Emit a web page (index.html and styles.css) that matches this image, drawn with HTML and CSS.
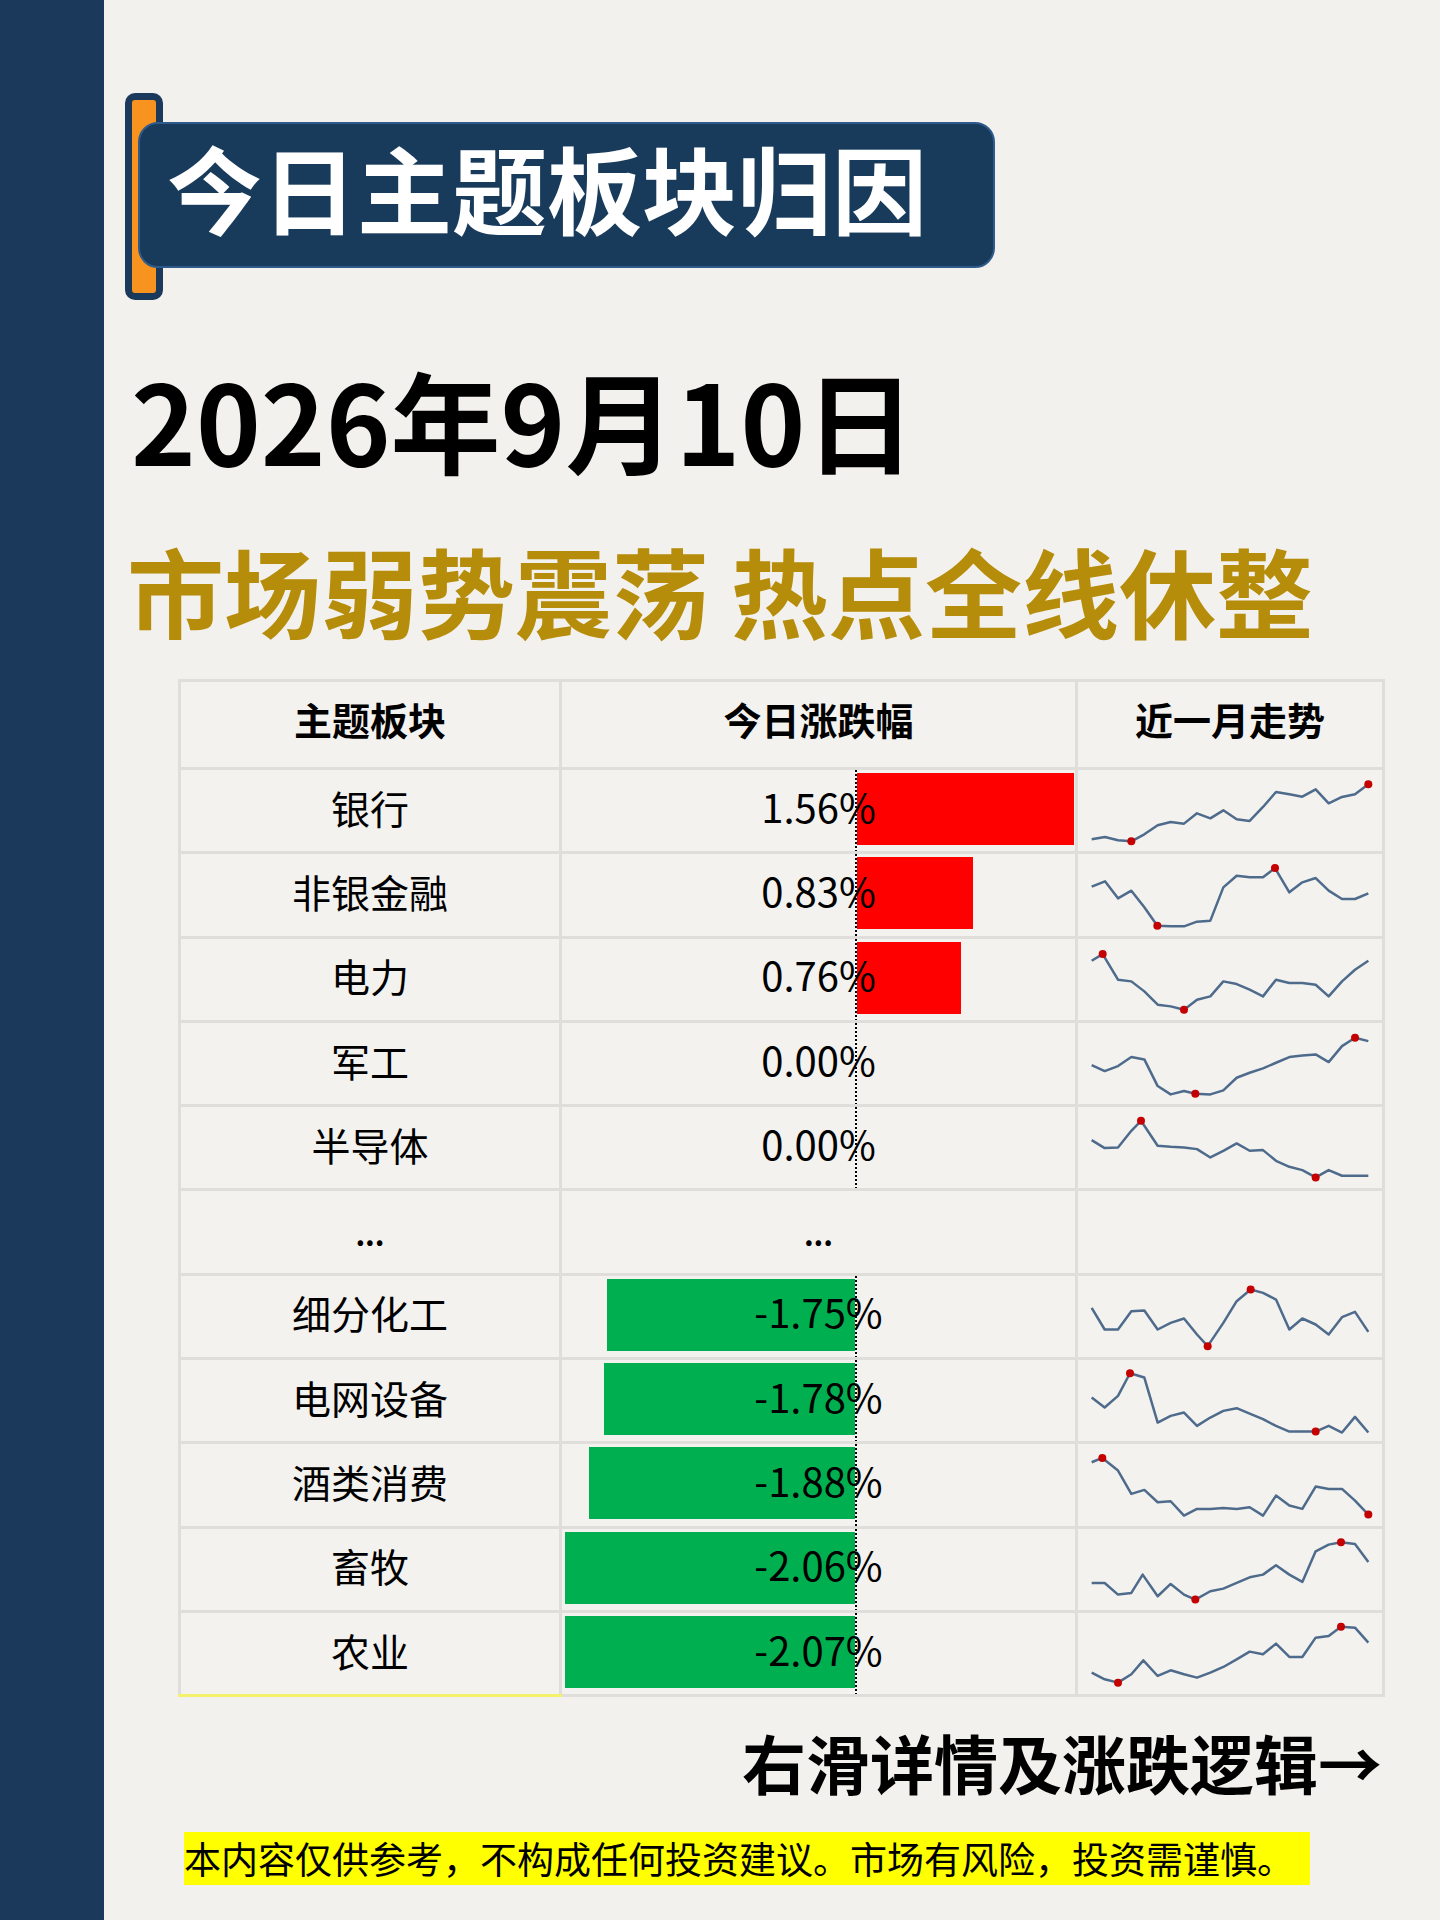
FILE: index.html
```html
<!DOCTYPE html>
<html lang="zh-CN">
<head>
<meta charset="utf-8">
<title>今日主题板块归因</title>
<link rel="stylesheet" href="styles.css">
</head>
<body>
<div class="page">
  <aside class="sidebar"></aside>
  <main class="main">
    <div class="title-wrap">
      <div class="title-tab"></div>
      <h1 class="title-box">今日主题板块归因</h1>
    </div>
    <div class="date">2026年9月10日</div>
    <div class="headline">市场弱势震荡 热点全线休整</div>

    <div class="board">
      <div class="cell th">主题板块</div>
      <div class="cell th">今日涨跌幅</div>
      <div class="cell th">近一月走势</div>

      <div class="cell name">银行</div>
      <div class="cell chg"><div class="zone"><div class="neg"></div><div class="axis"></div><div class="pos"><div class="bar up" style="width:217px"></div></div></div><div class="val">1.56%</div></div>
      <div class="cell spark"><svg viewBox="24 27 912 244" preserveAspectRatio="none"><polyline points="65,235 105,228 144,238 184,241 223,220 263,193 302,183 342,188 381,157 421,172 460,148 500,175 539,180 579,138 618,93 658,100 697,107 737,85 776,127 816,108 855,100 895,70"/><circle cx="184" cy="241" r="12"/><circle cx="895" cy="70" r="12"/></svg></div>

      <div class="cell name">非银金融</div>
      <div class="cell chg"><div class="zone"><div class="neg"></div><div class="axis"></div><div class="pos"><div class="bar up" style="width:116px"></div></div></div><div class="val">0.83%</div></div>
      <div class="cell spark"><svg viewBox="24 279.9 912 244" preserveAspectRatio="none"><polyline points="65,378 105,362 144,413 184,390 223,440 262,495 302,497 342,497 381,483 421,480 460,380 500,345 539,350 579,350 615,322 658,395 697,365 737,352 776,390 816,415 855,415 895,398"/><circle cx="262" cy="495" r="12"/><circle cx="615" cy="322" r="12"/></svg></div>

      <div class="cell name">电力</div>
      <div class="cell chg"><div class="zone"><div class="neg"></div><div class="axis"></div><div class="pos"><div class="bar up" style="width:104px"></div></div></div><div class="val">0.76%</div></div>
      <div class="cell spark"><svg viewBox="24 532.8 912 244" preserveAspectRatio="none"><polyline points="65,598 98,578 144,655 184,660 223,690 263,730 302,735 342,745 381,715 421,705 460,660 500,668 539,685 579,705 618,655 658,665 697,665 737,670 776,705 816,660 855,625 895,598"/><circle cx="98" cy="578" r="12"/><circle cx="342" cy="745" r="12"/></svg></div>

      <div class="cell name">军工</div>
      <div class="cell chg"><div class="zone"><div class="neg"></div><div class="axis"></div><div class="pos"></div></div><div class="val">0.00%</div></div>
      <div class="cell spark"><svg viewBox="24 785.7 912 244" preserveAspectRatio="none"><polyline points="65,912 104,930 144,915 184,888 223,895 263,975 302,1000 342,990 376,998 421,1000 460,988 500,950 539,935 579,922 618,905 658,888 697,883 737,880 776,903 816,855 855,830 895,840"/><circle cx="376" cy="998" r="12"/><circle cx="855" cy="830" r="12"/></svg></div>

      <div class="cell name">半导体</div>
      <div class="cell chg"><div class="zone"><div class="neg"></div><div class="axis"></div><div class="pos"></div></div><div class="val">0.00%</div></div>
      <div class="cell spark"><svg viewBox="24 1038.6 912 244" preserveAspectRatio="none"><polyline points="65,1138 104,1162 144,1160 184,1110 213,1080 263,1155 302,1158 342,1160 381,1165 421,1190 460,1170 500,1148 539,1170 579,1168 618,1200 658,1218 697,1228 737,1250 776,1228 816,1245 855,1245 895,1245"/><circle cx="213" cy="1080" r="12"/><circle cx="737" cy="1250" r="12"/></svg></div>

      <div class="cell name dots">...</div>
      <div class="cell name dots">...</div>
      <div class="cell"></div>

      <div class="cell name">细分化工</div>
      <div class="cell chg"><div class="zone"><div class="neg"><div class="bar down" style="width:248px"></div></div><div class="axis"></div><div class="pos"></div></div><div class="val">-1.75%</div></div>
      <div class="cell spark"><svg viewBox="24 44.4 912 244" preserveAspectRatio="none"><polyline points="65,140 104,205 144,205 184,150 223,148 263,205 302,185 342,172 381,220 413,255 460,185 500,120 542,85 579,95 618,115 658,205 697,172 737,190 776,220 816,168 855,152 895,212"/><circle cx="413" cy="255" r="12"/><circle cx="542" cy="85" r="12"/></svg></div>

      <div class="cell name">电网设备</div>
      <div class="cell chg"><div class="zone"><div class="neg"><div class="bar down" style="width:251px"></div></div><div class="axis"></div><div class="pos"></div></div><div class="val">-1.78%</div></div>
      <div class="cell spark"><svg viewBox="24 297.3 912 244" preserveAspectRatio="none"><polyline points="65,410 104,440 144,405 180,337 223,350 263,485 302,465 342,455 381,495 421,470 460,450 500,442 539,458 579,475 618,495 658,512 697,512 737,512 776,495 816,515 855,468 895,515"/><circle cx="180" cy="337" r="12"/><circle cx="737" cy="512" r="12"/></svg></div>

      <div class="cell name">酒类消费</div>
      <div class="cell chg"><div class="zone"><div class="neg"><div class="bar down" style="width:266px"></div></div><div class="axis"></div><div class="pos"></div></div><div class="val">-1.88%</div></div>
      <div class="cell spark"><svg viewBox="24 550.2 912 244" preserveAspectRatio="none"><polyline points="65,605 97,592 144,630 184,700 223,688 263,725 302,722 342,765 381,745 421,745 460,742 500,745 539,740 579,765 618,705 658,735 697,745 737,678 776,685 816,685 855,720 895,762"/><circle cx="97" cy="592" r="12"/><circle cx="895" cy="762" r="12"/></svg></div>

      <div class="cell name">畜牧</div>
      <div class="cell chg"><div class="zone"><div class="neg"><div class="bar down" style="width:290px"></div></div><div class="axis"></div><div class="pos"></div></div><div class="val">-2.06%</div></div>
      <div class="cell spark"><svg viewBox="24 803.1 912 244" preserveAspectRatio="none"><polyline points="65,965 104,965 144,1000 184,995 218,940 263,1005 302,968 342,1000 376,1015 421,990 460,982 500,965 539,948 579,940 618,912 658,940 697,962 737,870 776,850 813,843 855,848 895,902"/><circle cx="376" cy="1015" r="12"/><circle cx="813" cy="843" r="12"/></svg></div>

      <div class="cell name">农业</div>
      <div class="cell chg"><div class="zone"><div class="neg"><div class="bar down" style="width:290px"></div></div><div class="axis"></div><div class="pos"></div></div><div class="val">-2.07%</div></div>
      <div class="cell spark"><svg viewBox="24 1056 912 244" preserveAspectRatio="none"><polyline points="65,1235 104,1255 144,1265 184,1240 220,1198 263,1245 302,1228 342,1240 381,1250 421,1235 460,1218 500,1195 539,1172 579,1180 618,1148 658,1188 697,1188 737,1130 776,1125 813,1097 855,1100 895,1145"/><circle cx="144" cy="1265" r="12"/><circle cx="813" cy="1097" r="12"/></svg></div>
    </div>

    <div class="swipe">右滑详情及涨跌逻辑→</div>
    <div class="note"><span class="note-text">本内容仅供参考，不构成任何投资建议。市场有风险，投资需谨慎。</span></div>
  </main>
</div>
</body>
</html>
```

FILE: styles.css
```css
html, body {
  margin: 0;
  padding: 0;
}
body {
  background: #F3F1EE;
  font-family: "Noto Sans CJK SC", "Noto Sans", sans-serif;
  color: #000;
}
.page {
  display: flex;
  width: 1440px;
  min-height: 1920px;
}
.sidebar {
  width: 104px;
  flex: none;
  background: #1B3A5B;
}
.main {
  flex: 1;
  display: flex;
  flex-direction: column;
  align-items: flex-start;
}

/* title block */
.title-wrap {
  position: relative;
  margin: 93px 0 0 21px;
  padding-top: 29px;
  height: 207px;
  box-sizing: border-box;
}
.title-tab {
  position: absolute;
  left: 0;
  top: 0;
  width: 38px;
  height: 207px;
  box-sizing: border-box;
  background: #F7931E;
  border: 7px solid #1B3A5B;
  border-radius: 10px;
}
.title-box {
  position: relative;
  margin: 0 0 0 13px;
  width: 857px;
  height: 146px;
  box-sizing: border-box;
  padding: 15px 0 0 27px;
  background: #183B5B;
  border: 2px solid #2F5B8C;
  border-radius: 20px;
  color: #fff;
  font-size: 95px;
  font-weight: 700;
  line-height: 1;
  white-space: nowrap;
}

.date {
  margin: 63px 0 0 27px;
  font-size: 110px;
  font-weight: 700;
  line-height: 1;
  white-space: nowrap;
}
.headline {
  margin: 67px 0 0 23px;
  font-size: 97px;
  font-weight: 700;
  line-height: 1;
  color: #B68C0B;
  white-space: nowrap;
}

/* table */
.board {
  margin: 42px 0 0 74px;
  width: 1207px;
  box-sizing: border-box;
  display: grid;
  grid-template-columns: 378px 513px 304px;
  grid-template-rows: 85px repeat(11, 81.3px);
  gap: 3px;
  padding: 3px;
  background: linear-gradient(#F4F26A, #F4F26A) 0 100% / 384px 3px no-repeat, #E0DEDB;
}
.cell {
  background: #F3F2EF;
  display: flex;
  align-items: center;
  justify-content: center;
  min-width: 0;
}
.th {
  font-size: 38px;
  font-weight: 700;
  padding-bottom: 12px;
}
.name {
  font-size: 39px;
  font-weight: 400;
  padding-bottom: 8px;
}
.dots {
  font-weight: 700;
  font-size: 30px;
  padding-bottom: 0;
  padding-top: 2px;
}
.chg {
  display: grid;
  grid-template-columns: 100%;
  grid-template-rows: 100%;
  justify-content: stretch;
  align-content: stretch;
  align-items: center;
  justify-items: center;
}
.chg > * {
  grid-area: 1 / 1;
}
.zone {
  align-self: stretch;
  justify-self: stretch;
  display: flex;
}
.neg {
  width: 293px;
  flex: none;
  display: flex;
  justify-content: flex-end;
  align-items: flex-start;
  padding-top: 3px;
}
.axis {
  width: 2px;
  flex: none;
  background: repeating-linear-gradient(180deg, #000 0 2px, #fff 2px 4px);
}
.pos {
  flex: 1;
  display: flex;
  align-items: flex-start;
  padding-top: 3px;
}
.bar {
  height: 72px;
}
.bar.up {
  background: #FF0000;
}
.bar.down {
  background: #00B050;
}
.val {
  font-size: 40px;
  font-weight: 400;
  line-height: 1;
  padding-bottom: 10px;
}
.spark svg {
  display: block;
  width: 100%;
  height: 100%;
}
.spark polyline {
  fill: none;
  stroke: #4E6B8C;
  stroke-width: 7.5;
  stroke-linejoin: round;
}
.spark circle {
  fill: #C40000;
}

.swipe {
  align-self: stretch;
  margin-top: 32px;
  padding-right: 58px;
  text-align: right;
  font-size: 64px;
  font-weight: 700;
  line-height: 1;
  white-space: nowrap;
}
.note {
  margin: 39px 0 0 80px;
}
.note-text {
  display: inline-block;
  background: #FFFF00;
  height: 53px;
  line-height: 53px;
  padding-right: 16px;
  font-size: 37px;
  white-space: nowrap;
}
```
